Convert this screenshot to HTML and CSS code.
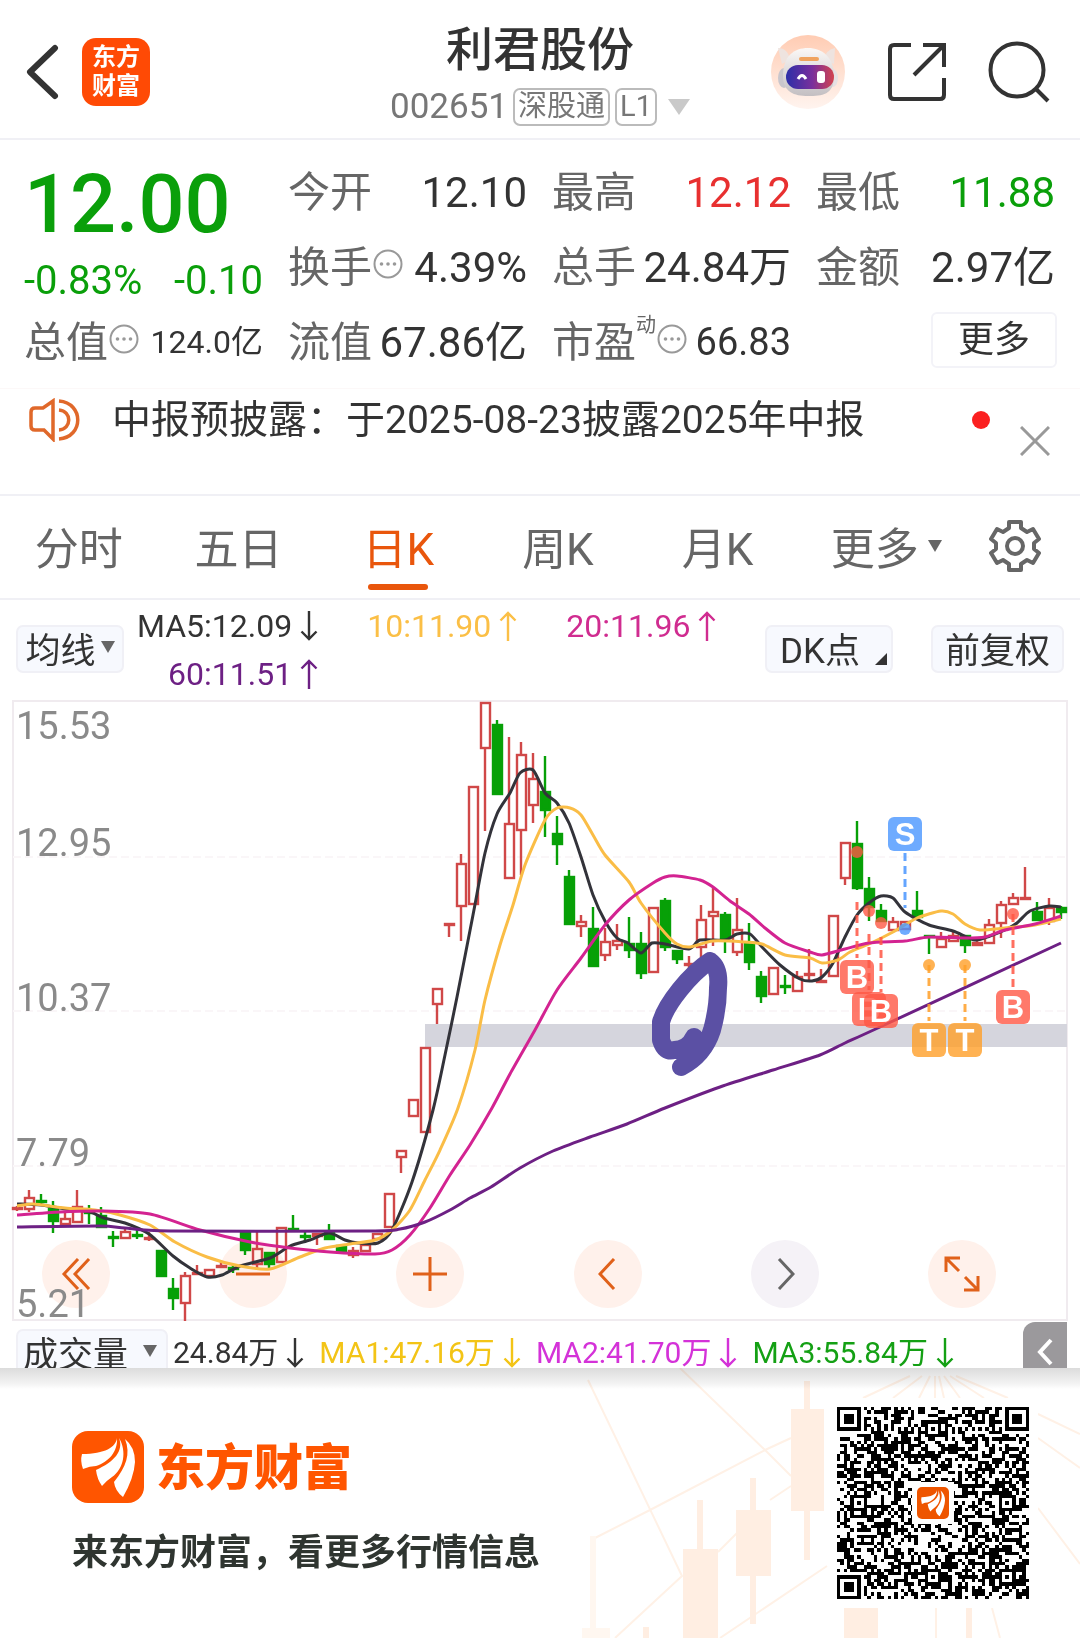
FILE: index.html
```html
<!DOCTYPE html>
<html lang="zh-CN">
<head>
<meta charset="utf-8">
<meta name="viewport" content="width=device-width, initial-scale=1">
<title>利君股份 002651</title>
<link rel="stylesheet" href="styles.css">
</head>
<body>
<svg class="defs" aria-hidden="true">
  <symbol id="more-dots" viewBox="0 0 30 30"><circle cx="15" cy="15" r="13.5" fill="none" stroke="#999" stroke-width="2"/><g fill="#999"><circle cx="8.500" cy="15" r="1.800"/><circle cx="15" cy="15" r="1.800"/><circle cx="21.500" cy="15" r="1.800"/></g></symbol>
  <symbol id="down" viewBox="0 0 18 30"><path d="M9 0V28M1.500 20.500L9 28L16.500 20.500" fill="none" stroke="currentColor" stroke-width="2.400"/></symbol>
  <symbol id="up" viewBox="0 0 18 30"><path d="M9 30V2M1.500 9.500L9 2L16.500 9.500" fill="none" stroke="currentColor" stroke-width="2.400"/></symbol>
  <symbol id="feather" viewBox="0 0 72 72"><g fill="#fff"><path d="M45 7C44 16 33 23 10 23Q8 30 11 38Q18 35 24 35C37 31 46 20 45 7Z"/><path d="M47 7C52 20 42 31 24 39Q25 48 30 55Q34 50 40 46C52 38 55 20 47 7Z"/><path d="M53 8C59 23 54 36 42 51Q43 60 51 66Q62 47 63 31Q63 16 53 8Z"/></g></symbol>
</svg>

<header class="topbar">
  <div class="topbar-left">
    <button class="icon-button back" aria-label="返回"><svg width="34" height="56" viewBox="0 0 34 56"><path d="M30 4L5 28L30 52" fill="none" stroke="#333" stroke-width="6" stroke-linecap="round" stroke-linejoin="round"/></svg></button>
    <a class="app-badge" href="#"><span>东方</span><span>财富</span></a>
  </div>
  <div class="stock-title">
    <h1>利君股份</h1>
    <button class="stock-code"><span>002651</span><span class="tag">深股通</span><span class="tag">L1</span><svg class="code-arrow" width="22" height="16" viewBox="0 0 22 16"><path d="M0 0H22L11 16Z" fill="#c9c9c9"/></svg></button>
  </div>
  <div class="topbar-right">
    <button class="icon-button" aria-label="智能助手"><svg width="76" height="76" viewBox="0 0 76 76">
      <defs><linearGradient id="halo" x2="0" y2="1"><stop offset="0" stop-color="#ffccb3"/><stop offset="1" stop-color="#fff4ef"/></linearGradient><linearGradient id="visor"><stop offset="0" stop-color="#2c2fa8"/><stop offset=".55" stop-color="#7a2f9c"/><stop offset="1" stop-color="#d2434f"/></linearGradient><linearGradient id="shell" x2="0" y2="1"><stop offset="0" stop-color="#fbf8f6"/><stop offset="1" stop-color="#c3bfc2"/></linearGradient></defs>
      <circle cx="38" cy="38" r="37" fill="url(#halo)"/>
      <path d="M8 14Q18 14 20 26L12 30ZM65 14Q55 16 54 26L64 30Z" fill="#eee3df"/>
      <ellipse cx="14" cy="44" rx="6" ry="10" fill="#c9c6cc"/><ellipse cx="63" cy="44" rx="5" ry="9" fill="#e6e1e3"/>
      <path d="M13 42C13 22 24 14 38 14S64 23 64 42S52 62 38 62S13 58 13 42Z" fill="url(#shell)"/>
      <rect x="29" y="23" width="20" height="4" rx="2" fill="#f0a35f"/>
      <rect x="16" y="31" width="48" height="24" rx="12" fill="url(#visor)"/>
      <path d="M28 45Q32 38 36 45" fill="none" stroke="#fff" stroke-width="3"/><rect x="47" y="37" width="8" height="12" rx="3" fill="#fff"/>
    </svg></button>
    <button class="icon-button" aria-label="分享"><svg width="60" height="60" viewBox="0 0 60 60"><g fill="none" stroke="#333" stroke-width="4"><path d="M24 3H7Q3 3 3 7V53Q3 57 7 57H53Q57 57 57 53V36"/><path d="M36 3H57V25M56 4L27 33"/></g></svg></button>
    <button class="icon-button" aria-label="搜索"><svg width="62" height="62" viewBox="0 0 62 62"><g fill="none" stroke="#333" stroke-width="4"><circle cx="29" cy="29" r="26.500"/><path d="M47 47L60 60"/></g></svg></button>
  </div>
</header>

<section class="quote">
  <div class="price"><strong>12.00</strong><div class="change"><span>-0.83%</span><span>-0.10</span></div></div>
  <div class="cell"><span>今开</span><b>12.10</b></div>
  <div class="cell"><span>最高</span><b class="up">12.12</b></div>
  <div class="cell"><span>最低</span><b class="down">11.88</b></div>
  <div class="cell"><span>换手</span><svg class="dots"><use href="#more-dots"/></svg><b>4.39%</b></div>
  <div class="cell"><span>总手</span><b>24.84万</b></div>
  <div class="cell"><span>金额</span><b>2.97亿</b></div>
  <div class="cell"><span>总值</span><svg class="dots"><use href="#more-dots"/></svg><b class="small">124.0亿</b></div>
  <div class="cell"><span>流值</span><b>67.86亿</b></div>
  <div class="cell"><span>市盈</span><sup>动</sup><svg class="dots"><use href="#more-dots"/></svg><b class="medium">66.83</b></div>
  <div class="cell"><button class="more">更多</button></div>
</section>

<section class="notice">
  <svg class="speaker" width="52" height="44" viewBox="0 0 52 44"><g fill="none" stroke="#e0682a" stroke-width="3.500"><path d="M24 3V41L15 32H6Q2 32 2 28V14Q2 10 6 10H14Z"/><path d="M30 3C55 5 55 39 30 41M30 12C43 13 43 31 30 32"/></g></svg>
  <a href="#">中报预披露：于2025-08-23披露2025年中报</a>
  <i class="unread"></i>
  <button class="icon-button close" aria-label="关闭"><svg width="30" height="30" viewBox="0 0 30 30"><path d="M1 1L29 29M29 1L1 29" stroke="#999" stroke-width="3"/></svg></button>
</section>

<nav class="tabs">
  <button>分时</button><button>五日</button><button class="active">日K</button><button>周K</button><button>月K</button>
  <button>更多<svg width="14" height="12" viewBox="0 0 14 12"><path d="M0 0H14L7 12Z" fill="#666"/></svg></button>
  <button aria-label="设置"><svg width="54" height="54" viewBox="0 0 54 54"><g fill="none" stroke="#666" stroke-width="4" stroke-linejoin="round"><path d="M21 3H33V9L39 13L45 10L51 20L46 24V30L51 34L45 44L39 41L33 45V51H21V45L15 41L9 44L3 34L8 30V24L3 20L9 10L15 13L21 9Z"/><circle cx="27" cy="27" r="8"/></g></svg></button>
</nav>

<section class="indicators">
  <button class="chip ma-select">均线<svg width="14" height="12" viewBox="0 0 14 12"><path d="M0 0H14L7 12Z" fill="#666"/></svg></button>
  <div class="ma-values">
    <span class="ma5">MA5:12.09<svg><use href="#down"/></svg></span>
    <span class="ma10">10:11.90<svg><use href="#up"/></svg></span>
    <span class="ma20">20:11.96<svg><use href="#up"/></svg></span>
    <span class="ma60">60:11.51<svg><use href="#up"/></svg></span>
  </div>
  <div class="chips">
    <button class="chip dk">DK点<svg width="12" height="12" viewBox="0 0 12 12"><path d="M12 0V12H0Z" fill="#333"/></svg></button>
    <button class="chip">前复权</button>
  </div>
</section>

<section class="chart">
  <svg id="kline" viewBox="0 700 1080 622" role="img" aria-label="日K线图"></svg>
  <div class="chart-tools">
    <button aria-label="最左"><svg width="30" height="32" viewBox="0 0 30 32"><path d="M17 1L3 16L17 31M28 1L14 16L28 31"/></svg></button>
    <button aria-label="缩小"><svg width="34" height="34" viewBox="0 0 34 34"><path d="M0 17H34"/></svg></button>
    <button aria-label="放大"><svg width="34" height="34" viewBox="0 0 34 34"><path d="M0 17H34M17 0V34"/></svg></button>
    <button aria-label="左移"><svg width="20" height="32" viewBox="0 0 20 32"><path d="M16 1L2 16L16 31"/></svg></button>
    <button aria-label="右移" class="disabled"><svg width="20" height="32" viewBox="0 0 20 32"><path d="M4 1L18 16L4 31"/></svg></button>
    <button aria-label="全屏"><svg width="36" height="36" viewBox="0 0 36 36"><path d="M2 16V2H16M2 2L15 15M34 20V34H20M34 34L21 21"/></svg></button>
  </div>
</section>

<section class="volume">
  <button class="chip vol-select">成交量<svg width="14" height="12" viewBox="0 0 14 12"><path d="M0 0H14L7 12Z" fill="#666"/></svg></button>
  <div class="vol-values">
    <span>24.84万<svg><use href="#down"/></svg></span>
    <span class="v1">MA1:47.16万<svg><use href="#down"/></svg></span>
    <span class="v2">MA2:41.70万<svg><use href="#down"/></svg></span>
    <span class="v3">MA3:55.84万<svg><use href="#down"/></svg></span>
  </div>
  <button class="collapse" aria-label="收起"><svg width="16" height="28" viewBox="0 0 16 28"><path d="M14 2L3 14L14 26" fill="none" stroke="#fff" stroke-width="4"/></svg></button>
</section>

<footer class="promo">
  <svg class="promo-art" width="520" height="270" viewBox="0 0 520 270" aria-hidden="true">
    <g fill="none" stroke="#fff1e6" stroke-width="2"><path d="M28 12L122 208L55 270M120 0L205 82L231 108M35 170L90 142L205 82L231 70M158 184L177 165M210 132L231 118M160 270L267 198"/><path d="M350 8L303 30M362 8L333 30M370 8L359 30M375 8V30M379 8L384 30M384 8L400 30M390 8L424 30M396 8L448 30M478 46L520 66M478 70L520 100M478 140L520 196M376 240V270M432 240L440 270"/></g>
    <g fill="#ffeee2"><path d="M244 13h6v28h14v102h-14v49h-6v-49h-13V41h13zM190 110h6v32h15v66h-15v48h-6v-48h-14v-66h14zM137 132h6v49h15v89h-35v-89h14zM284 240h34v30h-34zM406 240h6v30h-6zM83 259h6v11h-6z"/></g>
    <path d="M30 168h6v92h14v10H22v-10h8z" fill="#fff7f0"/>
  </svg>
  <div class="brand">
    <div class="brand-name"><svg class="brand-logo" width="72" height="72"><use href="#feather"/></svg><strong>东方财富</strong></div>
    <p>来东方财富，看更多行情信息</p>
  </div>
  <div class="qr">
    <svg id="qr" width="192" height="192" viewBox="0 0 57 57" shape-rendering="crispEdges" role="img" aria-label="二维码"></svg>
    <div class="qr-logo"><svg width="32" height="32" viewBox="0 0 72 72"><use href="#feather"/></svg></div>
  </div>
</footer>
<script src="chart.js"></script>
</body>
</html>
```

FILE: styles.css
```css
* { box-sizing: border-box; }
body { margin: 0; background: #fff; color: #333; font-family: Roboto, "Noto Sans CJK SC", sans-serif; }
button { border: 0; padding: 0; margin: 0; background: none; color: inherit; font: inherit; white-space: nowrap; }
a { color: inherit; text-decoration: none; }
svg { display: block; flex: none; }
.defs { position: absolute; width: 0; height: 0; }
.icon-button { display: flex; }

.topbar { display: grid; grid-template-columns: 1fr auto 1fr; height: 140px; border-bottom: 2px solid #f0f0f5; }
.topbar-left { display: flex; align-items: center; gap: 23px; padding: 6px 0 0 25px; }
.app-badge { display: flex; flex-direction: column; align-items: center; justify-content: center; width: 68px; height: 68px; border-radius: 14px; background: #ff4a05; color: #fff; font-size: 24px; font-weight: 700; line-height: 29px; }
.stock-title { display: flex; flex-direction: column; align-items: center; padding-top: 20px; }
.stock-title h1 { margin: 0; font-size: 47px; font-weight: 500; line-height: 60px; }
.stock-code { display: flex; align-items: center; gap: 5px; margin-top: 7px; color: #777; font-size: 35px; line-height: 40px; }
.tag { height: 38px; padding: 0 3px; border: 2px solid #bbb; border-radius: 7px; font-size: 29px; line-height: 33px; }
.code-arrow { margin-left: 6px; }
.topbar-right { display: flex; align-items: center; justify-content: flex-end; gap: 41px; padding: 6px 30px 0 0; }

.quote { display: grid; grid-template-columns: repeat(4, 1fr); grid-auto-rows: 75px; column-gap: 25px; height: 249px; padding: 15px 25px 0 24px; border-bottom: 1px solid #fcf8f8; font-size: 42px; }
.price { grid-row: span 2; color: #0a9f0a; }
.price strong { display: block; font-size: 81px; font-weight: 500; line-height: 100px; }
.change { display: flex; justify-content: space-between; font-size: 40px; line-height: 52px; }
.cell { display: flex; align-items: center; line-height: 75px; color: #666; white-space: nowrap; }
.cell b { margin-left: auto; font-weight: 400; color: #333; }
.cell .up { color: #e83030; }
.cell .down { color: #0a9f0a; }
.cell .small { font-size: 32px; }
.cell .medium { font-size: 38px; }
.dots { width: 30px; height: 30px; margin: 0 0 8px 1px; }
.cell sup { align-self: flex-start; font-size: 20px; line-height: 40px; }
.more { width: 126px; height: 56px; margin: 0 -2px 6px auto; border: 2px solid #f3f3f8; border-radius: 6px; color: #333; font-size: 36px; line-height: 48px; }

.notice { display: flex; align-items: flex-start; height: 107px; padding: 9px 30px 0 29px; border-bottom: 2px solid #f0f0f5; }
.notice a { margin-left: 31px; font-size: 39px; line-height: 44px; white-space: nowrap; }
.unread { width: 18px; height: 18px; margin: 13px 30px 0 auto; border-radius: 50%; background: #fb2020; }
.close { margin-top: 28px; }

.tabs { display: grid; grid-template-columns: 160fr 160fr 160fr 160fr 160fr 178fr 80fr; height: 104px; padding: 0 24px 0 0; border-bottom: 2px solid #f0f0f5; color: #666; font-size: 44px; }
.tabs button { display: flex; align-items: center; justify-content: center; gap: 9px; padding: 0 2px 2px 0; }
.tabs .active { position: relative; color: #e9560c; }
.tabs .active::after { content: ""; position: absolute; bottom: 8px; left: 50%; width: 60px; height: 6px; margin-left: -31px; border-radius: 3px; background: #e9560c; }

.indicators { display: flex; align-items: flex-start; height: 100px; padding: 0 16px; }
.chip { display: flex; align-items: center; justify-content: center; height: 48px; margin-top: 25px; padding-bottom: 4px; border: 2px solid #f0f0f6; border-radius: 7px; background: #f7f9fe; font-size: 35px; }
.ma-select { width: 108px; gap: 5px; }
.ma-values { display: grid; grid-template-columns: repeat(3, auto); column-gap: 49px; margin-left: 13px; padding-top: 2px; font-size: 32px; line-height: 48px; }
.ma-values span, .vol-values span { display: flex; align-items: center; justify-content: flex-end; gap: 8px; }
.ma-values svg, .vol-values svg { width: 18px; height: 30px; }
.ma10 { color: #fbbf46; }
.ma20 { color: #d02c90; }
.ma60 { color: #6d2084; }
.chips { display: flex; gap: 38px; margin-left: auto; }
.chips .chip { padding: 0 12px 4px; }
.chips .dk { width: 128px; padding: 0 4px 4px 13px; justify-content: space-between; }
.dk svg { margin-top: 24px; }

.chart { position: relative; }
.chart > svg { position: relative; z-index: 1; width: 100%; height: auto; pointer-events: none; }
.chart-tools { position: absolute; right: 84px; bottom: 14px; left: 42px; display: flex; justify-content: space-between; }
.chart-tools button { display: flex; align-items: center; justify-content: center; width: 68px; height: 68px; border-radius: 50%; background: #fff1eb; color: #e0611a; }
.chart-tools .disabled { background: #f5f2f7; color: #666; }
.chart-tools path { fill: none; stroke: currentColor; stroke-width: 3; }

.volume { display: flex; align-items: flex-start; height: 46px; padding: 0 13px 0 16px; overflow: hidden; }
.vol-select { width: 152px; gap: 15px; margin-top: 7px; padding-right: 4px; }
.vol-values { display: flex; gap: 15px; padding-left: 5px; font-size: 30px; line-height: 62px; }
.v1 { color: #f3c416; }
.v2 { color: #d432d8; }
.v3 { color: #14a014; }
.collapse { display: flex; align-items: center; justify-content: center; width: 44px; height: 60px; margin-left: auto; border-radius: 12px 0 0 0; background: #9b999c; }

.promo { position: relative; display: flex; justify-content: space-between; height: 270px; padding: 30px 42px 30px 72px; background: linear-gradient(#dcdcdc, #f4f4f4 16px, #fff 21px); }
.promo-art { position: absolute; top: 0; right: 0; mix-blend-mode: multiply; }
.brand { padding-top: 33px; }
.brand-name { display: flex; align-items: center; gap: 12px; color: #ff5500; font-size: 49px; line-height: 72px; }
.brand-name strong { padding-top: 4px; font-weight: 900; line-height: 68px; }
.brand-logo { border-radius: 16px; background: #ff5500; }
.brand p { margin: 22px 0 0; color: #2f3530; font-size: 36px; font-weight: 700; line-height: 56px; }
.qr { position: relative; width: 210px; height: 210px; padding: 9px; background: #fff; }
.qr-logo { position: absolute; inset: 84px; padding: 5px; background: #fff; }
.qr-logo svg { border-radius: 5px; background: #ee5500; }
```

FILE: chart.js
```js
const RED = '#d04848';
const GREEN = '#07a007';
const FIRST_X = 17;
const STEP = 12;

// One entry per trading day: direction, high, body top, body bottom, low.
const candles = [
  ['r',1206,1207,1210,1211],['r',1190,1197,1210,1212],['g',1194,1200,1203,1205],['g',1201,1208,1222,1233],
  ['r',1213,1218,1225,1225],['r',1190,1206,1223,1223],['g',1205,1211,1213,1224],['g',1207,1215,1228,1228],
  ['g',1231,1236,1239,1247],['r',1228,1231,1239,1239],['g',1230,1234,1236,1239],['r',1232,1237,1240,1241],
  ['g',1250,1250,1277,1277],['g',1278,1288,1299,1310],['r',1272,1275,1304,1321],['r',1265,1272,1275,1275],
  ['r',1269,1269,1277,1277],['r',1262,1265,1267,1267],['g',1264,1267,1269,1273],['g',1232,1232,1251,1255],
  ['r',1232,1248,1265,1270],['g',1252,1252,1265,1268],['r',1227,1227,1263,1263],['g',1215,1228,1230,1230],
  ['g',1232,1235,1238,1241],['r',1233,1233,1237,1245],['g',1224,1232,1240,1240],['g',1245,1245,1252,1252],
  ['r',1247,1250,1256,1258],['r',1244,1244,1252,1252],['r',1233,1233,1240,1240],['r',1193,1193,1228,1228],
  ['r',1150,1150,1158,1173],['r',1099,1099,1117,1117],['r',1047,1047,1133,1133],['r',988,988,1005,1024],
  ['r',923,923,925,937],['r',854,863,907,941],['r',786,786,905,905],['r',702,702,749,831],
  ['g',720,724,795,795],['r',737,823,879,879],['r',742,754,831,875],['r',753,778,806,823],
  ['g',756,791,811,837],['g',816,833,845,865],['g',870,876,925,925],['r',915,921,927,937],
  ['g',907,928,967,967],['r',928,941,956,961],['r',924,940,946,950],['g',917,943,951,958],
  ['g',932,943,974,979],['r',907,907,973,973],['g',898,900,948,951],['g',950,950,960,964],
  ['r',956,963,965,970],['r',905,919,948,958],['r',888,911,917,946],['g',912,914,939,953],
  ['r',898,929,953,956],['g',923,942,963,970],['g',971,976,997,1003],['r',967,967,995,995],
  ['g',975,985,988,994],['r',971,976,992,992],['r',949,973,976,980],['r',969,980,983,983],
  ['r',915,915,977,977],['r',842,842,879,885],['g',821,843,889,890],['g',877,888,908,921],
  ['g',904,910,922,922],['r',917,921,931,931],['r',921,921,930,930],['g',891,910,918,918],
  ['g',935,935,937,954],['r',932,938,948,948],['r',931,935,942,942],['g',935,935,946,953],
  ['r',940,942,946,946],['r',919,924,944,944],['r',901,904,924,938],['r',893,897,905,905],
  ['r',867,897,898,898],['g',902,911,921,921],['r',898,907,922,925],['g',906,907,913,919]
];

const averages = {
  '#33333a': '17,1204 41,1205 65,1209 90,1212 104,1218 125,1223 149,1234 173,1256 190,1268 207,1277 222,1275 240,1266 270,1258 290,1246 310,1240 329,1233 345,1240 358,1243 378,1243 392,1230 412,1182 433,1110 445,1055 457,997 473,915 485,853 497,814 510,793 520,773 533,770 545,793 557,803 569,823 581,857 593,895 605,921 617,938 628,943 641,953 652,943 665,944 689,949 700,940 725,940 737,934 750,934 762,947 780,965 800,979 812,981 822,977 833,963 845,937 857,915 869,903 881,896 893,898 905,912 929,925 953,931 975,940 990,936 1005,930 1017,923 1030,911 1049,906 1061,907',
  '#fabd46': '17,1206 33,1204 65,1208 95,1210 120,1215 150,1225 175,1242 207,1257 240,1266 270,1269 300,1257 325,1248 350,1244 375,1240 392,1230 410,1210 425,1180 440,1150 458,1108 475,1050 485,1000 500,945 513,905 525,865 545,820 557,808 570,808 581,815 593,835 605,855 629,882 641,903 665,933 677,944 690,947 713,941 745,942 762,944 785,955 810,958 822,963 838,960 850,952 869,944 893,932 917,918 941,911 953,914 965,924 980,930 1005,928 1035,925 1061,919',
  '#d32391': '17,1215 60,1212 100,1211 150,1214 200,1230 250,1242 290,1248 330,1252 375,1254 392,1250 410,1235 430,1208 450,1175 470,1145 492,1108 510,1074 535,1030 557,990 581,958 605,925 629,900 653,883 665,877 677,876 700,880 713,887 730,901 749,914 765,928 785,943 810,952 822,955 845,949 869,943 905,941 929,937 965,938 985,937 1005,930 1035,924 1061,916',
  '#6d2084': '17,1227 100,1226 125,1228 170,1231 370,1231 400,1229 425,1222 450,1210 470,1198 491,1187 520,1168 553,1151 590,1137 627,1124 665,1108 720,1087 773,1070 820,1055 845,1043 880,1027 1061,943'
};

// Trade markers: letter, colour, day x, badge y, dashed line start and end, dot y.
const markers = [
  ['S', '#4a96ff', 905, 817, 853, 908, 929],
  ['B', '#ff5745', 857, 960, 902, 958, 852],
  ['B', '#ff5745', 869, 992, 934, 990, 911],
  ['B', '#ff5745', 881, 994, 937, 992, 923],
  ['B', '#ff5745', 1013, 990, 914, 988, 914],
  ['T', '#ff9f28', 929, 1023, 965, 1021, 965],
  ['T', '#ff9f28', 965, 1023, 965, 1021, 965]
];

// Turns a point list into a smooth path through every point.
function smooth(list) {
  const p = list.split(' ').map(s => s.split(',').map(Number));
  let d = 'M' + p[0];
  for (let i = 0; i < p.length - 1; i++) {
    const a = p[i - 1] || p[i], b = p[i], c = p[i + 1], e = p[i + 2] || c;
    d += `C${b[0] + (c[0] - a[0]) / 8},${b[1] + (c[1] - a[1]) / 8} ${c[0] - (e[0] - b[0]) / 8},${c[1] - (e[1] - b[1]) / 8} ${c}`;
  }
  return d;
}

function drawChart() {
  let s = '<g fill="none" stroke="#f0ebef" stroke-width="2"><path d="M13 701H1067V1320H13Z"/>' +
    '<path stroke="#faf6f8" stroke-dasharray="8 4" d="M13 857H1067M13 1011H1067M13 1166H1067"/></g>' +
    '<rect x="425" y="1024" width="642" height="23" fill="#d5d5dd"/>';
  candles.forEach(([dir, high, top, bottom, low], i) => {
    const x = FIRST_X + i * STEP;
    const color = dir === 'r' ? RED : GREEN;
    s += `<g stroke="${color}" stroke-width="2.400"><path d="M${x} ${high}V${top}M${x} ${bottom}V${low}"/>`;
    const h = Math.max(bottom - top - 2, 1);
    s += `<rect x="${x - 4}" y="${top + 1}" width="9" height="${h}" fill="${dir === 'r' ? 'none' : color}"/></g>`;
  });
  for (const color in averages) {
    s += `<path d="${smooth(averages[color])}" fill="none" stroke="${color}" stroke-width="3"/>`;
  }
  s += '<path d="M710 961C690 974 666 1004 661 1022V1040Q665 1053 674 1050Q688 1050 694 1037M710 961Q720 968 718 988Q718 1008 712 1030Q704 1055 681 1067" fill="none" stroke="#5b50a4" stroke-width="18" stroke-linecap="round" stroke-linejoin="round"/>';
  for (const [letter, color, x, y, from, to, dot] of markers) {
    s += `<path d="M${x} ${from}V${to}" stroke="${color}" stroke-width="3" stroke-dasharray="8 5" opacity=".85"/>` +
      `<circle cx="${x}" cy="${dot}" r="6" fill="${color}" opacity=".8"/>` +
      `<rect x="${x - 17}" y="${y}" width="34" height="34" rx="6" fill="${color}" opacity=".8"/>` +
      `<text x="${x}" y="${y + 28}" text-anchor="middle" font-family="Liberation Sans" font-size="31" font-weight="700" fill="#fff">${letter}</text>`;
  }
  [['15.53', 739], ['12.95', 856], ['10.37', 1011], ['7.79', 1166], ['5.21', 1317]].forEach(([t, y]) => {
    s += `<text x="16" y="${y}" font-size="38" fill="#8a8a8a">${t}</text>`;
  });
  document.getElementById('kline').innerHTML = s;
}

function drawCode() {
  const N = 57;
  let seed = 2651, d = '';
  const ring = (x, y, cx, cy) => Math.max(Math.abs(x - cx), Math.abs(y - cy));
  for (let y = 0; y < N; y++) {
    for (let x = 0; x < N; x++) {
      seed = (seed * 1103515245 + 12345) % 2147483648;
      let on = (seed >> 16) % 100 < 51;
      if (x === 6 || y === 6) on = (x + y) % 2 === 0;
      for (const [cx, cy] of [[28, 6], [6, 28], [28, 28], [50, 28], [28, 50], [50, 50]]) {
        const r = ring(x, y, cx, cy);
        if (r <= 2) on = r !== 1;
      }
      for (const [cx, cy] of [[3, 3], [53, 3], [3, 53]]) {
        const r = ring(x, y, cx, cy);
        if (r <= 4) on = r !== 2 && r !== 4;
      }
      if (on) d += `M${x} ${y}h1v1h-1z`;
    }
  }
  document.getElementById('qr').innerHTML = `<path d="${d}"/>`;
}

drawChart();
drawCode();
```
